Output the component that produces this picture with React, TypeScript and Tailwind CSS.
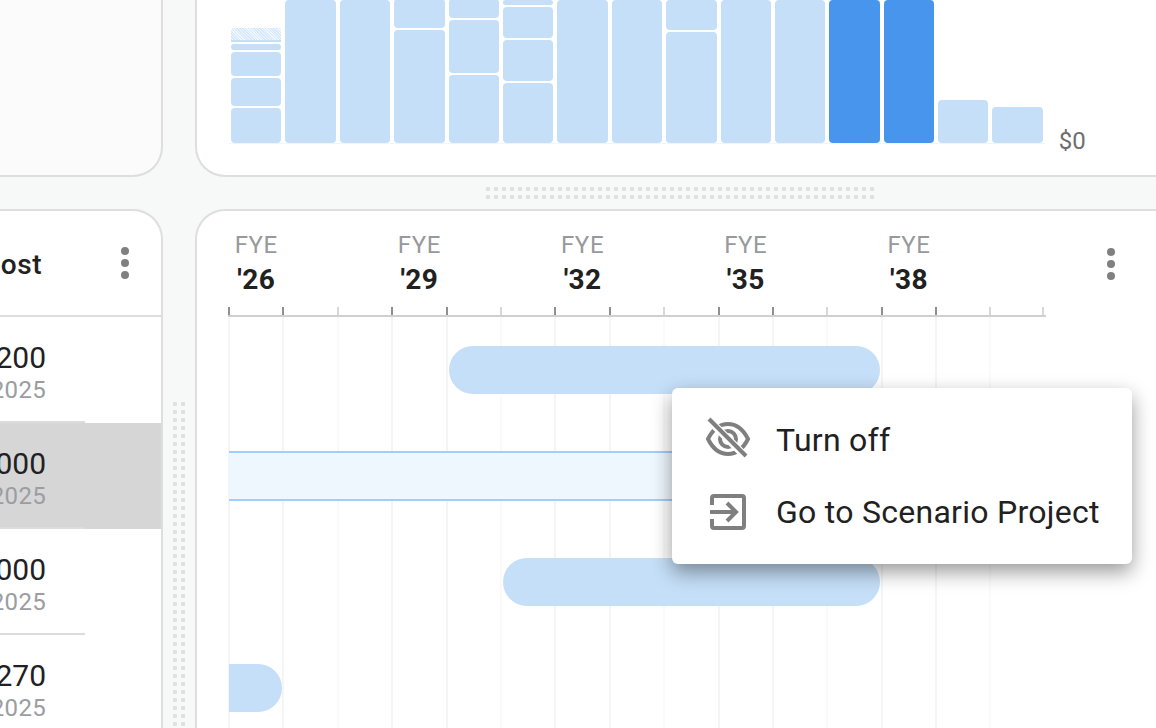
const barSegments: { h: number[]; dark?: boolean }[] = [
  { h: [] },
  { h: [143] },
  { h: [143] },
  { h: [113, 29] },
  { h: [68, 53, 19] },
  { h: [60, 41, 31, 5] },
  { h: [143] },
  { h: [143] },
  { h: [111, 30] },
  { h: [143] },
  { h: [143] },
  { h: [143], dark: true },
  { h: [143], dark: true },
  { h: [43] },
  { h: [36] },
];

const firstBar = [35, 28, 24, 6];

const rows = [
  { value: '$1,200', date: 'Jun 2025', selected: false, line: true },
  { value: '$3,000', date: 'Jun 2025', selected: true, line: true },
  { value: '$5,000', date: 'Jun 2025', selected: false, line: true },
  { value: '$8,270', date: 'Jun 2025', selected: false, line: false },
];

const ticks = Array.from({ length: 15 }, (_, i) => i);
const minorTicks = [2, 5, 8, 11, 14];
const years = ["'26", "'29", "'32", "'35", "'38"];

function Kebab() {
  return (
    <div className="flex flex-col gap-[4px]">
      <div className="w-[8px] h-[8px] rounded-full bg-[#808080]" />
      <div className="w-[8px] h-[8px] rounded-full bg-[#808080]" />
      <div className="w-[8px] h-[8px] rounded-full bg-[#808080]" />
    </div>
  );
}

function Bar({ index }: { index: number }) {
  const bar = barSegments[index];
  return (
    <div className="w-[54.4px] px-[2px] flex flex-col justify-end gap-[2px] h-full border-b border-[#f3f4f5]">
      {index === 0 && (
        <>
          <div className="shrink-0">
            <div className="h-[12px] rounded-t-[3px] bg-[repeating-linear-gradient(45deg,#d6e8fa_0px,#d6e8fa_1px,#f0f6fd_1px,#f0f6fd_2px)]" />
            <div className="h-[2px] bg-[#c5dff8]" />
          </div>
          {[...firstBar].reverse().map((h, i) => (
            <div key={i} className="shrink-0 rounded-[4px] bg-[#c5dff8]" style={{ height: h }} />
          ))}
        </>
      )}
      {[...bar.h].reverse().map((h, i) => (
        <div
          key={i}
          className={`shrink-0 rounded-[4px] ${bar.dark ? 'bg-[#4895ee]' : 'bg-[#c5dff8]'}`}
          style={{ height: h }}
        />
      ))}
    </div>
  );
}

export default function App() {
  return (
    <div className="w-[1156px] h-[728px] overflow-hidden flex flex-col bg-[#f7f8f8] font-['Roboto',sans-serif]">
      {/* Top row */}
      <div className="flex h-[177px] shrink-0">
        <div className="w-[163px] shrink-0 bg-[#fbfbfb] border-r-2 border-b-2 border-[#dedede] rounded-br-[30px]" />
        <div className="w-[32px] shrink-0" />
        <div className="flex-1 bg-white border-l-2 border-b-2 border-[#dedede] rounded-bl-[30px] pl-[32px] pb-[31px] flex items-end overflow-hidden">
          <div className="flex h-[143px] items-end">
            {barSegments.map((_, i) => (
              <Bar key={i} index={i} />
            ))}
          </div>
          <span className="ml-[14px] mb-[-10px] text-[24px] leading-[26px] text-[#6e6e6e]">$0</span>
        </div>
      </div>

      {/* Horizontal resize gutter */}
      <div className="h-[32px] shrink-0 pl-[484px] pt-[8px]">
        <div className="w-[392px] h-[16px] bg-[radial-gradient(circle,#e0e0e0_2px,transparent_2.5px)] bg-[length:8px_8px]" />
      </div>

      {/* Bottom row */}
      <div className="flex flex-1 min-h-0">
        <div className="w-[163px] shrink-0 bg-white border-r-2 border-t-2 border-[#dedede] rounded-tr-[30px] overflow-hidden flex flex-col">
          <div className="h-[106px] shrink-0 border-b-2 border-[#dedede] flex items-center">
            <div className="w-[42px] mt-[4px] overflow-hidden flex justify-end whitespace-nowrap text-[28px] tracking-[0.5px] font-medium text-[#212121]">
              Total Cost
            </div>
            <div className="ml-[79px]">
              <Kebab />
            </div>
          </div>
          {rows.map((r) => (
            <div
              key={r.value}
              className={`h-[106px] shrink-0 relative flex flex-col justify-center pt-[3px] ${r.selected ? 'bg-[#d6d6d6]' : ''}`}
            >
              <div className="w-[46px] overflow-hidden flex justify-end whitespace-nowrap text-[30px] leading-[36px] text-[#212121]">
                {r.value}
              </div>
              <div className="w-[46px] mt-[1px] overflow-hidden flex justify-end whitespace-nowrap text-[24px] leading-[26px] tracking-[0.3px] text-[#9b9da1]">
                {r.date}
              </div>
              {r.line && <div className="absolute left-0 bottom-0 w-[85px] h-[2px] bg-[#dcdcdc]" />}
            </div>
          ))}
        </div>

        {/* Vertical resize gutter */}
        <div className="w-[32px] shrink-0 pl-[8px] pt-[191px]">
          <div className="w-[16px] h-[400px] bg-[radial-gradient(circle,#e0e0e0_2px,transparent_2.5px)] bg-[length:8px_8px]" />
        </div>

        <div className="flex-1 bg-white border-l-2 border-t-2 border-[#dedede] rounded-tl-[30px] relative overflow-hidden">
          {/* Years */}
          <div className="h-[96px] pl-[32px] pt-[20px] flex items-start">
            {years.map((y) => (
              <div key={y} className="w-[163.2px] shrink-0">
                <div className="w-[54.4px] flex flex-col items-center">
                  <span className="text-[24px] leading-[28px] tracking-[0.6px] text-[#97999d]">FYE</span>
                  <span className="text-[28px] leading-[42px] tracking-[0.4px] font-bold text-[#212121]">{y}</span>
                </div>
              </div>
            ))}
            <div className="absolute left-[910px] top-[37px]">
              <Kebab />
            </div>
          </div>

          {/* Axis */}
          <div className="ml-[31px] w-[818px] h-[10px] flex border-b-2 border-[#cfcfcf]">
            {ticks.map((t) => (
              <div
                key={t}
                className={`w-[54.4px] shrink-0 border-l-2 ${minorTicks.includes(t) ? 'border-[#d8d8d8]' : 'border-[#8f8f8f]'} ${t === 14 ? 'border-r-2 border-r-[#d8d8d8]' : ''}`}
              />
            ))}
          </div>

          {/* Timeline rows */}
          <div className="relative ml-[32px]">
            <div className="absolute left-[-1px] top-0 h-[420px] flex">
              {ticks.map((t) => (
                <div
                  key={t}
                  className={`w-[54.4px] shrink-0 border-l-2 ${minorTicks.includes(t) ? 'border-[#fafafa]' : 'border-[#f4f5f6]'}`}
                />
              ))}
            </div>
            <div className="relative flex flex-col">
              <div className="h-[106px] flex items-center">
                <div className="ml-[220px] w-[431px] h-[48px] rounded-full bg-[#c5dff8]" />
              </div>
              <div className="h-[106px] flex items-center">
                <div className="w-[651px] h-[50px] bg-[#eff7fe] border-y-2 border-[#a4cdf8]" />
              </div>
              <div className="h-[106px] flex items-center">
                <div className="ml-[274px] w-[377px] h-[48px] rounded-full bg-[#c5dff8]" />
              </div>
              <div className="h-[106px] flex items-center">
                <div className="w-[53px] h-[48px] rounded-r-full bg-[#c5dff8]" />
              </div>
            </div>
          </div>
        </div>
      </div>

      {/* Context menu */}
      <div className="absolute left-[672px] top-[388px] w-[460px] h-[176px] bg-white rounded-[6px] shadow-[0_8px_20px_rgba(0,0,0,0.4)] flex flex-col justify-center">
        <div className="h-[72px] flex items-center pl-[33px]">
          <svg width="46" height="46" viewBox="0 0 46 46" fill="none" stroke="#7f7f7f" strokeWidth="4" className="mt-[-2px]">
            <path d="M3 23C8 13 15 8 23 8s15 5 20 15c-5 10-12 15-20 15S8 33 3 23Z" />
            <circle cx="23" cy="23" r="8" />
            <path d="M5 5l36 36" stroke="#ffffff" strokeWidth="8" />
            <path d="M4 3l37 37" strokeWidth="4" />
          </svg>
          <span className="ml-[25px] text-[32px] tracking-[0.27px] text-[#212121]">Turn off</span>
        </div>
        <div className="h-[72px] flex items-center pl-[38px]">
          <svg width="36" height="36" viewBox="0 0 36 36" fill="none" stroke="#7f7f7f" strokeWidth="4">
            <path d="M2 11V4a2 2 0 0 1 2-2h28a2 2 0 0 1 2 2v28a2 2 0 0 1-2 2H4a2 2 0 0 1-2-2v-7" />
            <path d="M0 18h26M17 9l9 9-9 9" />
          </svg>
          <span className="ml-[30px] text-[32px] tracking-[0.27px] text-[#212121]">Go to Scenario Project</span>
        </div>
      </div>
    </div>
  );
}
